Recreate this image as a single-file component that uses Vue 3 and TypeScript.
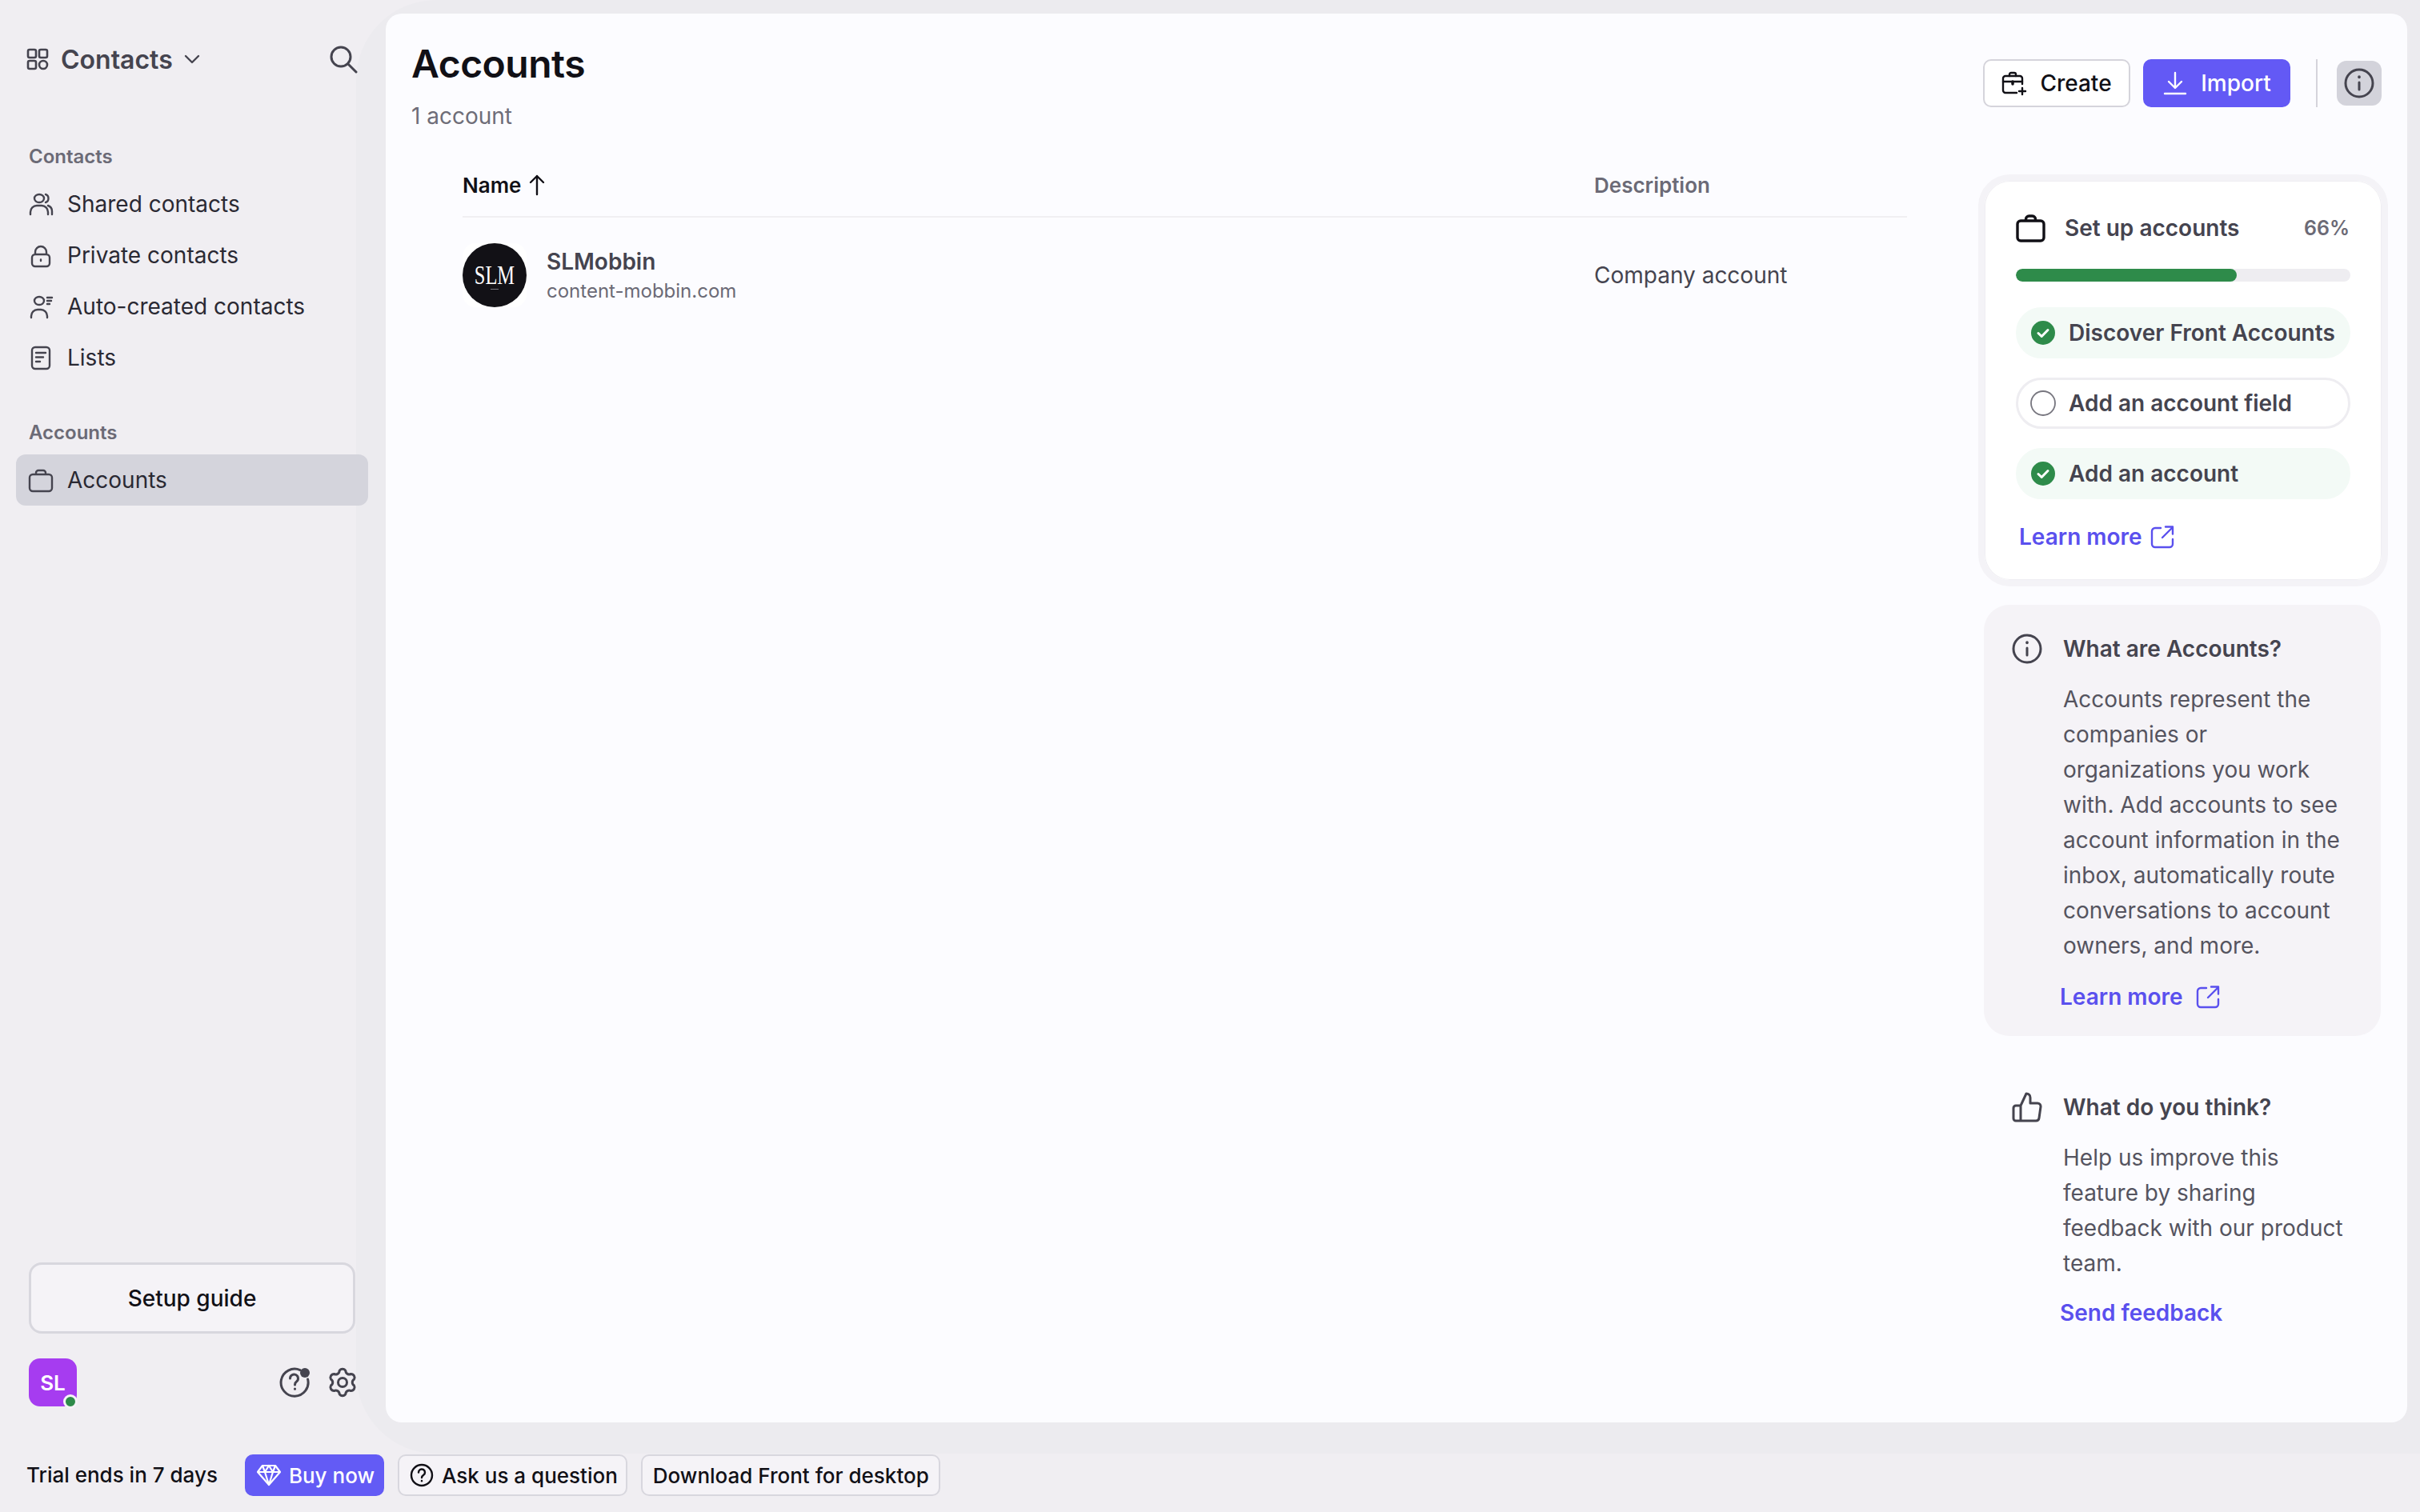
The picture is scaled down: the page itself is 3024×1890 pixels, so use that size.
<template>
  <div class="app">
    <div class="top">
      <aside class="sidebar">
        <div class="side-head">
          <svg class="grid-ico" width="28" height="28" viewBox="0 0 28 28" fill="none" stroke="#45444f" stroke-width="2.6">
            <rect x="2" y="2" width="10" height="10" rx="2" />
            <rect x="16" y="2" width="10" height="10" rx="2" />
            <rect x="2" y="16" width="10" height="10" rx="2" />
            <circle cx="21" cy="21" r="5" />
          </svg>
          <span class="side-title">Contacts</span>
          <svg class="chev" width="20" height="12" viewBox="0 0 20 12" fill="none" stroke="#45444f" stroke-width="2.4" stroke-linecap="round" stroke-linejoin="round">
            <path d="M2 2l8 8 8-8" />
          </svg>
          <svg class="search" width="36" height="36" viewBox="0 0 36 36" fill="none" stroke="#45444f" stroke-width="3" stroke-linecap="round">
            <circle cx="15" cy="15" r="12" />
            <path d="M24 24l10 10" />
          </svg>
        </div>

        <div v-for="group in navGroups" :key="group.label" class="nav-group">
          <div class="nav-label">{{ group.label }}</div>
          <div
            v-for="item in group.items"
            :key="item.name"
            class="nav-item"
            :class="{ active: item.active }"
          >
            <svg width="32" height="32" viewBox="0 0 32 32" fill="none" stroke="#45444f" stroke-width="2.4" stroke-linecap="round" stroke-linejoin="round">
              <path :d="item.icon" />
            </svg>
            <span>{{ item.name }}</span>
          </div>
        </div>

        <div class="spacer"></div>

        <button class="setup-guide">Setup guide</button>
        <div class="side-foot">
          <div class="avatar">SL<span class="online"></span></div>
          <svg class="help" width="40" height="38" viewBox="0 0 40 38" fill="none" stroke="#45444f" stroke-width="3" stroke-linecap="round">
            <path d="M26 3.600A17 17 0 1 0 35.600 15" />
            <path d="M13.500 14a5 5 0 1 1 8 4c-1.500 1-2 2-2 4" />
            <path d="M19.500 27v.2" />
            <circle cx="32" cy="7" r="6" fill="#45444f" stroke="none" />
          </svg>
          <svg class="gear" width="36" height="38" viewBox="0 0 36 38" fill="none" stroke="#45444f" stroke-width="3" stroke-linejoin="round">
            <path :d="gearPath" />
            <circle cx="18" cy="19" r="5.500" />
          </svg>
        </div>
      </aside>

      <div class="frame">
        <main class="card">
          <section class="list-col">
            <h1>Accounts</h1>
            <div class="count">1 account</div>
            <div class="table">
              <div class="t-row t-head">
                <div class="th-name">
                  Name
                  <svg width="24" height="28" viewBox="0 0 24 28" fill="none" stroke="#111016" stroke-width="2.4" stroke-linecap="round" stroke-linejoin="round">
                    <path d="M12 26V3M4 11l8-8 8 8" />
                  </svg>
                </div>
                <div class="th-desc">Description</div>
              </div>
              <div class="t-row t-body">
                <div class="acct">
                  <div class="logo">
                    <div class="logo-disc"><span>SLM</span><i></i></div>
                  </div>
                  <div class="acct-text">
                    <div class="acct-name">SLMobbin</div>
                    <div class="acct-domain">content-mobbin.com</div>
                  </div>
                </div>
                <div class="acct-desc">Company account</div>
              </div>
            </div>
          </section>

          <section class="right-col">
            <div class="actions">
              <button class="btn">
                <svg width="32" height="32" viewBox="0 0 32 32" fill="none" stroke="#111016" stroke-width="2.4" stroke-linecap="round" stroke-linejoin="round">
                  <path d="M26 17V10a3 3 0 0 0-3-3H5a3 3 0 0 0-3 3v15a3 3 0 0 0 3 3h14" />
                  <path d="M10 7V5a2 2 0 0 1 2-2h4a2 2 0 0 1 2 2v2" />
                  <path d="M2 14h24" />
                  <path d="M14 14v3" stroke-width="3.500" />
                  <path d="M26 22v8M22 26h8" />
                </svg>
                Create
              </button>
              <button class="btn primary">
                <svg width="32" height="32" viewBox="0 0 32 32" fill="none" stroke="#fff" stroke-width="2.4" stroke-linecap="round" stroke-linejoin="round">
                  <path d="M16 3v18M8 14l8 8 8-8" />
                  <path d="M3 29h26" />
                </svg>
                Import
              </button>
              <div class="divider"></div>
              <div class="info-btn">
                <svg width="38" height="38" viewBox="0 0 38 38" fill="none" stroke="#45444f" stroke-width="3" stroke-linecap="round">
                  <circle cx="19" cy="19" r="17" />
                  <path d="M19 18v9" />
                  <path d="M19 11v.5" stroke-width="3.600" />
                </svg>
              </div>
            </div>

            <div class="setup">
              <div class="setup-head">
                <svg width="38" height="36" viewBox="0 0 38 36" fill="none" stroke="#111016" stroke-width="3.400" stroke-linejoin="round">
                  <rect x="2" y="9" width="33" height="25" rx="4" />
                  <path d="M12.500 9V7a4 4 0 0 1 4-4h4a4 4 0 0 1 4 4v2" />
                </svg>
                <span class="setup-title">Set up accounts</span>
                <span class="pct">66%</span>
              </div>
              <div class="bar"><div class="bar-fill" :style="{ width: progress + '%' }"></div></div>
              <div
                v-for="step in steps"
                :key="step.name"
                class="pill"
                :class="{ done: step.done }"
              >
                <svg v-if="step.done" width="32" height="32" viewBox="0 0 32 32" fill="none">
                  <circle cx="16" cy="16" r="15" fill="#2e8b4a" />
                  <path d="M10 16.500l4.200 4L22 12.500" stroke="#fff" stroke-width="3" stroke-linecap="round" stroke-linejoin="round" />
                </svg>
                <svg v-else width="32" height="32" viewBox="0 0 32 32" fill="none">
                  <circle cx="16" cy="16" r="15" stroke="#77767f" stroke-width="1.800" />
                </svg>
                <span>{{ step.name }}</span>
              </div>
              <a class="link setup-link">
                Learn more
                <svg width="30" height="30" viewBox="0 0 30 30" fill="none" stroke="#5a50ee" stroke-width="2.400" stroke-linecap="round" stroke-linejoin="round">
                  <path d="M13 4H6a4 4 0 0 0-4 4v16a4 4 0 0 0 4 4h18a4 4 0 0 0 4-4v-6" />
                  <path d="M15 16L28 3M19 2.500h9v9" />
                </svg>
              </a>
            </div>

            <div class="help-block info-block">
              <div class="help-title">
                <svg width="38" height="38" viewBox="0 0 38 38" fill="none" stroke="#45444f" stroke-width="3" stroke-linecap="round">
                  <circle cx="19" cy="19" r="17" />
                  <path d="M19 18v9" />
                  <path d="M19 11v.5" stroke-width="3.600" />
                </svg>
                <span>What are Accounts?</span>
              </div>
              <p>Accounts represent the companies or organizations you work with. Add accounts to see account information in the inbox, automatically route conversations to account owners, and more.</p>
              <a class="link">
                Learn more
                <svg class="ext" width="30" height="30" viewBox="0 0 30 30" fill="none" stroke="#5a50ee" stroke-width="2.400" stroke-linecap="round" stroke-linejoin="round">
                  <path d="M13 4H6a4 4 0 0 0-4 4v16a4 4 0 0 0 4 4h18a4 4 0 0 0 4-4v-6" />
                  <path d="M15 16L28 3M19 2.500h9v9" />
                </svg>
              </a>
            </div>

            <div class="help-block think-block">
              <div class="help-title">
                <svg width="38" height="38" viewBox="0 0 38 38" fill="none" stroke="#45444f" stroke-width="3" stroke-linecap="round" stroke-linejoin="round">
                  <path d="M11 17v19H5a3 3 0 0 1-3-3V20a3 3 0 0 1 3-3h6l7-15c3 0 5 2 5 5v7h9a4 4 0 0 1 4 4.500l-2 14a4 4 0 0 1-4 3.500H11" />
                </svg>
                <span>What do you think?</span>
              </div>
              <p>Help us improve this feature by sharing feedback with our product team.</p>
              <a class="link">Send feedback</a>
            </div>
          </section>
        </main>
      </div>
    </div>

    <footer class="trial">
      <span class="trial-text">Trial ends in 7 days</span>
      <button class="tbtn buy">
        <svg width="30" height="28" viewBox="0 0 30 28" fill="none" stroke="#fff" stroke-width="2.200" stroke-linejoin="round">
          <path d="M7 2h16l6 8-14 16L1 10z" />
          <path d="M1 10h28M10 10l5 16 5-16M7 2l3 8 5-8 5 8 3-8" />
        </svg>
        Buy now
      </button>
      <button class="tbtn ask">
        <svg width="30" height="30" viewBox="0 0 30 30" fill="none" stroke="#111016" stroke-width="2.400" stroke-linecap="round">
          <circle cx="15" cy="15" r="13" />
          <path d="M11 11.500a4 4 0 1 1 6.200 3.300c-1.400 1-2.200 1.700-2.200 3.200" />
          <path d="M15 22v.2" />
        </svg>
        Ask us a question
      </button>
      <button class="tbtn">Download Front for desktop</button>
    </footer>
  </div>
</template>

<script setup lang="ts">
interface NavItem {
  name: string
  icon: string
  active?: boolean
}

const briefcase = 'M6 9h20a4 4 0 0 1 4 4v13a4 4 0 0 1-4 4H6a4 4 0 0 1-4-4V13a4 4 0 0 1 4-4zM10 9V7a3 3 0 0 1 3-3h6a3 3 0 0 1 3 3v2'

const navGroups: { label: string; items: NavItem[] }[] = [
  {
    label: 'Contacts',
    items: [
      {
        name: 'Shared contacts',
        icon: 'M14 4c3.300 0 6 2.200 6 5s-2.700 5-6 5-6-2.200-6-5 2.700-5 6-5zM3 29v-3a8 8 0 0 1 8-8h6a8 8 0 0 1 8 8v3M22 4c2 .6 3.500 2.600 3.500 5S24 13.400 22 14M25 18c3 1 5 4 5 7v4',
      },
      {
        name: 'Private contacts',
        icon: 'M9 15h14a4 4 0 0 1 4 4v7a4 4 0 0 1-4 4H9a4 4 0 0 1-4-4v-7a4 4 0 0 1 4-4zM9 15v-3a7 7 0 0 1 14 0v3M16 21.500v1.500',
      },
      {
        name: 'Auto-created contacts',
        icon: 'M14 4c3.300 0 6 2.200 6 5s-2.700 5-6 5-6-2.200-6-5 2.700-5 6-5zM4 30v-2a8 8 0 0 1 8-8h4a8 8 0 0 1 8 8v2M24 5h6M24 9h5M24 13h3',
      },
      {
        name: 'Lists',
        icon: 'M9 3h14a4 4 0 0 1 4 4v19a4 4 0 0 1-4 4H9a4 4 0 0 1-4-4V7a4 4 0 0 1 4-4zM10 10h12M10 15.500h9M10 21h5',
      },
    ],
  },
  {
    label: 'Accounts',
    items: [{ name: 'Accounts', icon: briefcase, active: true }],
  },
]

const progress = 66

const steps = [
  { name: 'Discover Front Accounts', done: true },
  { name: 'Add an account field', done: false },
  { name: 'Add an account', done: true },
]

// six rounded lobes: twelve points on a circle, joined by arcs bulging out then in
function buildGear(): string {
  let d = ''
  for (let i = 0; i < 12; i++) {
    const a = ((i * 30 - 105) * Math.PI) / 180
    const x = (18 + 15 * Math.cos(a)).toFixed(2)
    const y = (19 + 15 * Math.sin(a)).toFixed(2)
    if (i === 0) d += `M${x} ${y}`
    else d += `A4.500 4.500 0 0 ${i % 2} ${x} ${y}`
  }
  return d + 'A4.500 4.500 0 0 0 ' + (18 + 15 * Math.cos((-105 * Math.PI) / 180)).toFixed(2) + ' ' + (19 + 15 * Math.sin((-105 * Math.PI) / 180)).toFixed(2) + 'z'
}

const gearPath = buildGear()
</script>

<style>
html,
body {
  margin: 0;
  background: #f0eff3;
}
</style>

<style scoped>
.app {
  width: 3024px;
  height: 1890px;
  display: flex;
  flex-direction: column;
  background: #f0eef2;
  font-family: Inter, "Liberation Sans", sans-serif;
  font-size: 28px;
  color: #45444f;
  overflow: hidden;
}
.top {
  height: 1817px;
  display: flex;
}
.sidebar {
  width: 482px;
  margin-right: -37px;
  box-sizing: border-box;
  position: relative;
  z-index: 1;
  display: flex;
  flex-direction: column;
  padding: 52px 0 59px;
}
.side-head {
  height: 44px;
  display: flex;
  align-items: center;
  padding-left: 33px;
  margin-bottom: 86px;
  width: 414px;
}
.side-title {
  font-size: 32px;
  font-weight: 600;
  margin-left: 15px;
}
.chev {
  margin-left: 14px;
}
.search {
  margin-left: auto;
}
.nav-group {
  margin-bottom: 48px;
}
.nav-label {
  font-size: 24px;
  line-height: 28px;
  font-weight: 600;
  color: #6b6a76;
  padding-left: 36px;
  margin-bottom: 13px;
}
.nav-item {
  width: 440px;
  height: 64px;
  box-sizing: border-box;
  margin-left: 20px;
  padding-left: 15px;
  display: flex;
  align-items: center;
  gap: 17px;
  border-radius: 12px;
  color: #2a2933;
}
.nav-item.active {
  background: #d4d4dc;
}
.spacer {
  flex: 1;
}
.setup-guide {
  width: 408px;
  height: 89px;
  margin-left: 36px;
  box-sizing: border-box;
  border: 3px solid #d8d7de;
  border-radius: 16px;
  background: #f5f3f7;
  font: 500 28px Inter, sans-serif;
  color: #111016;
}
.side-foot {
  width: 410px;
  margin: 31px 0 0 36px;
  height: 60px;
  display: flex;
  align-items: center;
}
.avatar {
  width: 60px;
  height: 60px;
  border-radius: 14px;
  background: #a63cf0;
  color: #fff;
  font-size: 26px;
  font-weight: 600;
  display: flex;
  align-items: center;
  justify-content: center;
  position: relative;
}
.online {
  position: absolute;
  right: -1px;
  bottom: -3px;
  width: 12px;
  height: 12px;
  border-radius: 50%;
  background: #2e8b4a;
  border: 3px solid #f5f3f7;
}
.help {
  margin-left: auto;
}
.gear {
  margin-left: 21px;
}
.frame {
  flex: 1;
  box-sizing: border-box;
  padding: 17px 16px 39px 37px;
  background: #ecebef;
  border-radius: 100px 0 0 100px;
  display: flex;
}
.card {
  flex: 1;
  display: flex;
  background: #fcfcff;
  border-radius: 20px;
  overflow: hidden;
}
.list-col {
  width: 1990px;
  box-sizing: border-box;
  padding: 34px 89px 0 32px;
}
h1 {
  margin: 0;
  font-size: 48px;
  line-height: 58px;
  font-weight: 600;
  letter-spacing: -0.5px;
  color: #111016;
}
.count {
  margin-top: 16px;
  line-height: 40px;
  color: #6e6d78;
}
.table {
  margin: 27px 0 0 64px;
}
.t-row {
  display: grid;
  grid-template-columns: 1414px 1fr;
  align-items: center;
}
.t-head {
  height: 80px;
  border-bottom: 2px solid #f0eff2;
  box-sizing: border-box;
  font-size: 26px;
  font-weight: 600;
}
.th-name {
  display: flex;
  align-items: center;
  gap: 8px;
  color: #111016;
}
.th-desc {
  color: #6b6a76;
}
.t-body {
  padding: 32px 0;
}
.acct {
  display: flex;
  align-items: center;
  gap: 25px;
}
.logo {
  width: 80px;
  height: 80px;
  border-radius: 16px;
  background: #fff;
}
.logo-disc {
  width: 80px;
  height: 80px;
  border-radius: 50%;
  background: #121116;
  color: #fff;
  font-family: "Liberation Serif", serif;
  display: flex;
  flex-direction: column;
  align-items: center;
  justify-content: center;
}
.logo-disc span {
  font-size: 33px;
  line-height: 26px;
  transform: scaleX(0.74);
}
.logo-disc i {
  width: 10px;
  height: 1px;
  margin-top: 4px;
  margin-bottom: -4px;
  background: #77767f;
}
.acct-text {
  padding-top: 3px;
}
.acct-name {
  font-weight: 600;
  line-height: 36px;
}
.acct-domain {
  font-size: 24px;
  line-height: 36px;
  margin-top: 1px;
  color: #6b6a76;
}
.right-col {
  width: 512px;
  padding-top: 57px;
}
.actions {
  height: 60px;
  display: flex;
  align-items: center;
  justify-content: flex-end;
  padding-right: 8px;
}
.btn {
  height: 60px;
  width: 184px;
  box-sizing: border-box;
  border: 2px solid #d5d4db;
  border-radius: 10px;
  background: #fff;
  display: flex;
  align-items: center;
  justify-content: center;
  gap: 16px;
  font: 500 28px Inter, sans-serif;
  color: #111016;
  padding: 0;
}
.btn.primary {
  margin-left: 16px;
  background: #6359f5;
  border-color: #6359f5;
  color: #fff;
}
.divider {
  width: 2px;
  height: 60px;
  background: #d5d4db;
  margin: 0 24px 0 32px;
}
.info-btn {
  width: 56px;
  height: 56px;
  border-radius: 12px;
  background: #d3d3db;
  display: flex;
  align-items: center;
  justify-content: center;
}
.setup {
  margin-top: 84px;
  height: 515px;
  box-sizing: border-box;
  border: 8px solid #f4f3f7;
  border-radius: 40px;
  background: #fff;
  box-shadow: inset 0 0 0 1px #efeef2;
  padding: 41px 39px 0;
}
.setup-head {
  height: 36px;
  display: flex;
  align-items: center;
}
.setup-title {
  font-weight: 600;
  margin-left: 23px;
}
.pct {
  margin-left: auto;
  margin-right: 1px;
  font-size: 25px;
  font-weight: 600;
  color: #6b6a76;
}
.bar {
  height: 16px;
  border-radius: 8px;
  background: #eeedf1;
  margin: 33px 0 32px;
  overflow: hidden;
}
.bar-fill {
  height: 100%;
  border-radius: 8px;
  background: #2e8b4a;
}
.pill {
  height: 64px;
  box-sizing: border-box;
  border-radius: 32px;
  border: 3px solid #eeedf1;
  display: flex;
  align-items: center;
  gap: 16px;
  padding-left: 15px;
  margin-bottom: 24px;
  font-weight: 600;
}
.pill.done {
  background: #f3faf6;
  border-color: #f3faf6;
}
.link {
  display: flex;
  align-items: center;
  color: #5a50ee;
  font-weight: 600;
  line-height: 36px;
}
.setup-link {
  gap: 10px;
  margin: 29px 0 0 4px;
}
.help-block {
  margin: 23px 9px 0 7px;
  padding: 35px 0 0 35px;
  border-radius: 32px;
}
.info-block {
  height: 539px;
  box-sizing: border-box;
  background: #f5f3f7;
}
.help-block.think-block {
  margin-top: 34px;
}
.help-title {
  display: flex;
  align-items: center;
  gap: 26px;
  font-weight: 600;
  line-height: 40px;
}
.help-block p {
  margin: 21px 0 0 64px;
  width: 366px;
  font-size: 28px;
  line-height: 44px;
  color: #55545f;
}
.help-block .link {
  margin: 24px 0 0 60px;
}
.think-block .link {
  margin-top: 22px;
}
.ext {
  margin-left: 16px;
}
.trial {
  flex: 1;
  display: flex;
  align-items: flex-start;
  padding: 1px 0 0 33px;
  gap: 17px;
  font-size: 26px;
  font-weight: 500;
  color: #111016;
}
.trial-text {
  line-height: 52px;
  margin-right: 17px;
}
.tbtn {
  height: 52px;
  box-sizing: border-box;
  padding: 0 12px 0 13px;
  border: 2px solid #d8d7de;
  border-radius: 10px;
  background: #f5f3f7;
  display: flex;
  align-items: center;
  gap: 10px;
  font: 500 26px Inter, sans-serif;
  color: #111016;
}
.tbtn.ask {
  padding-right: 10px;
}
.buy {
  padding-right: 10px;
  background: #635bf5;
  border-color: #635bf5;
  color: #fff;
}
</style>
